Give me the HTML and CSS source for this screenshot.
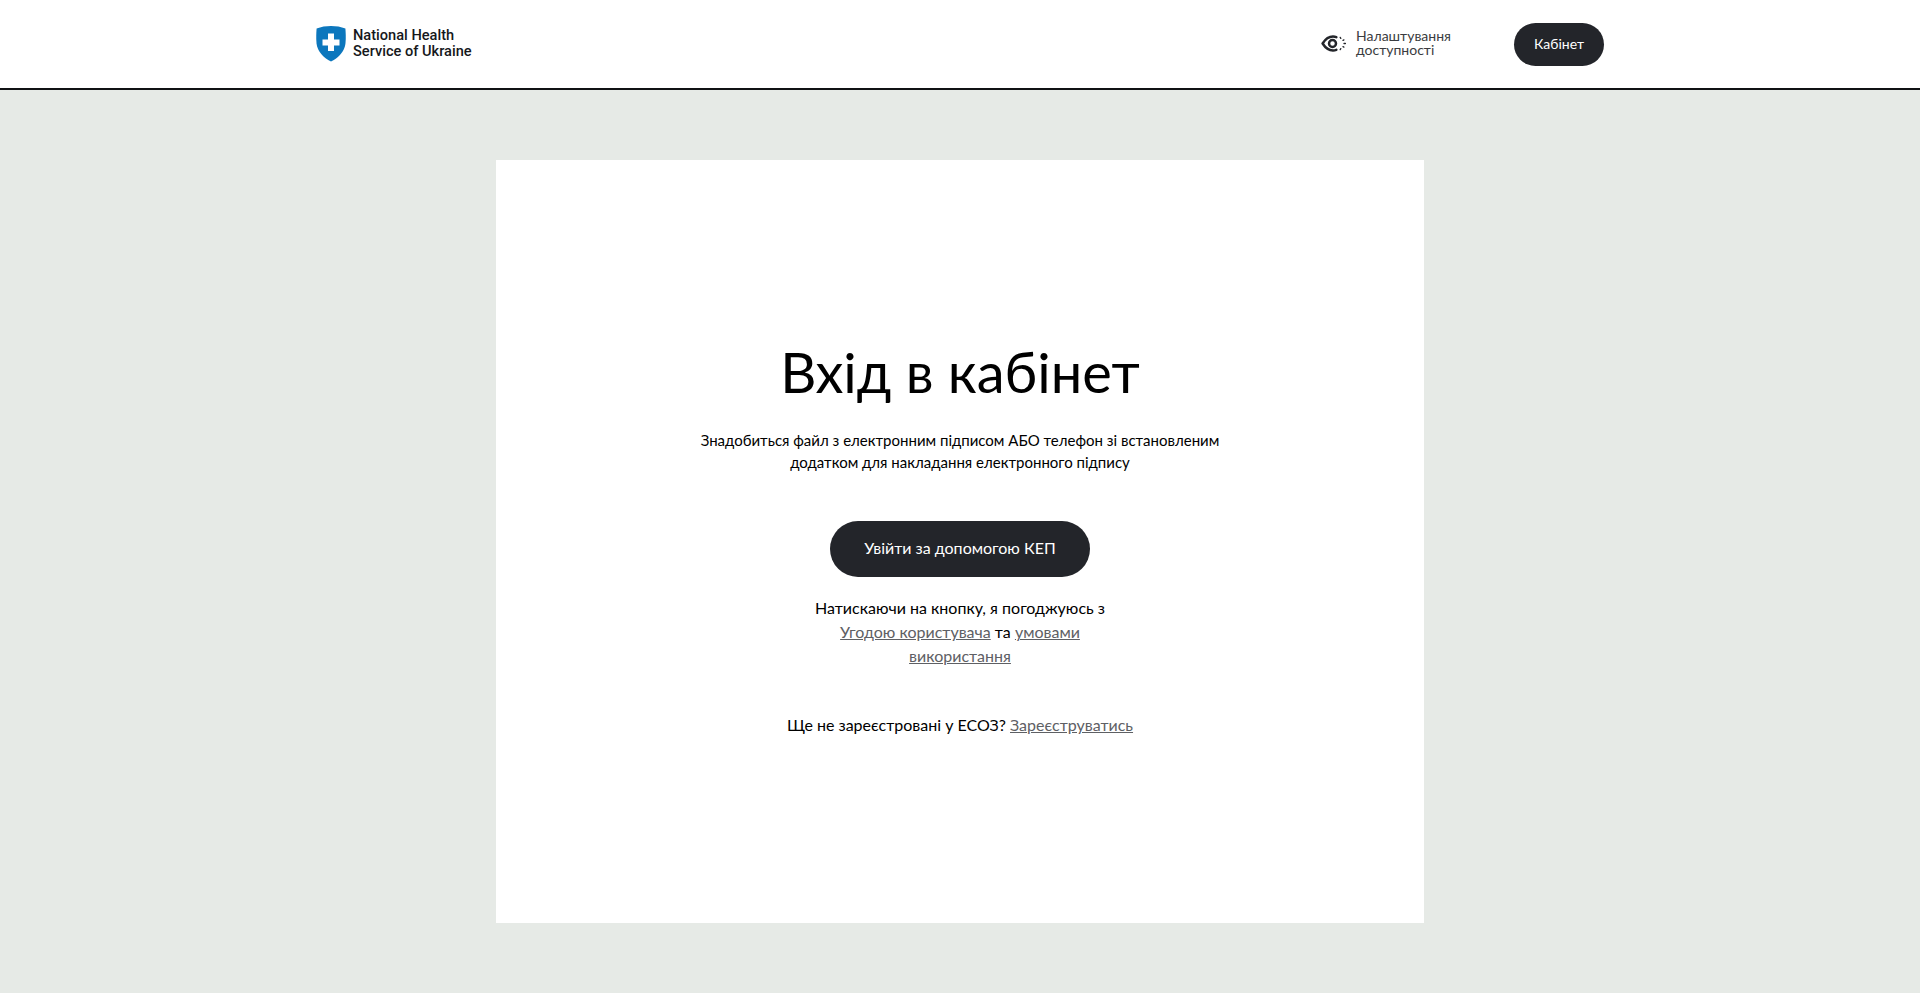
FILE: index.html
```html
<!DOCTYPE html>
<html lang="uk">
<head>
<meta charset="utf-8">
<title>Вхід в кабінет</title>
<link rel="stylesheet" href="styles.css">
</head>
<body>
<header class="header">
  <div class="header-inner">
    <a class="logo" href="#">
      <svg class="logo-mark" viewBox="0 0 30 36" width="30" height="36" aria-hidden="true">
        <path d="M15 0C10 0 5 .8 .6 2.600.2 8 0 13 .6 18c1 7.500 6.600 13.500 14.400 17.600C22.800 31.500 28.400 25.500 29.400 18c.6-5 .4-10 0-15.400C25 .8 20 0 15 0Z" fill="#0c77bd"/>
        <path d="M12 7.500h6v6h5.500v6H18V25h-6v-5.500H6.500v-6H12Z" fill="#fff"/>
      </svg>
      <span class="logo-text">National Health<br>Service of Ukraine</span>
    </a>
    <div class="header-actions">
      <a class="a11y" href="#">
        <svg class="a11y-icon" viewBox="0 0 26 20" width="26" height="20" aria-hidden="true">
          <path d="M1.600 9.500C4.500 5 8 2.600 12 2.600c1.200 0 2.300.2 3.300.6M1.600 9.500c2.900 4.500 6.400 6.900 10.400 6.900 1.200 0 2.300-.2 3.300-.6" fill="none" stroke="#23252a" stroke-width="2.500" stroke-linecap="round" stroke-linejoin="round"/>
          <circle cx="11.500" cy="9.500" r="3.500" fill="none" stroke="#23252a" stroke-width="2.500"/>
          <path d="M19.200 3.400l.6 1M22 6.400l.9-.5M23 9.500h1.400M22 12.600l.9.5M19.200 15.600l.6-1" fill="none" stroke="#23252a" stroke-width="1.300" stroke-linecap="round"/>
        </svg>
        <span class="a11y-text">Налаштування<br>доступності</span>
      </a>
      <a class="btn btn-small" href="#">Кабінет</a>
    </div>
  </div>
</header>
<main class="page">
  <section class="card">
    <h1 class="title">Вхід в кабінет</h1>
    <p class="lead">Знадобиться файл з електронним підписом АБО телефон зі встановленим додатком для накладання електронного підпису</p>
    <a class="btn btn-large" href="#">Увійти за допомогою КЕП</a>
    <p class="terms">Натискаючи на кнопку, я погоджуюсь з <a class="link" href="#">Угодою користувача</a> та <a class="link" href="#">умовами використання</a></p>
    <p class="register">Ще не зареєстровані у ЕСОЗ? <a class="link" href="#">Зареєструватись</a></p>
  </section>
</main>
</body>
</html>
```
FILE: styles.css
```css
* { box-sizing: border-box; }
html, body { margin: 0; height: 100%; }
body {
  min-height: 993px;
  background: #e6eae6;
  color: #000;
  font-family: "Lato", "Noto Sans", sans-serif;
  display: flex;
  flex-direction: column;
}
a { text-decoration: none; color: inherit; }
.header {
  height: 90px;
  background: #fff;
  border-bottom: 2px solid #101214;
  flex: none;
}
.header-inner {
  width: 1288px;
  height: 88px;
  margin: 0 auto;
  display: flex;
  align-items: center;
  justify-content: space-between;
}
.logo { display: flex; align-items: center; gap: 7px; }
.logo-mark { display: block; }
.logo-text {
  font-family: "Roboto", sans-serif;
  font-weight: 500;
  font-size: 14.6px;
  line-height: 16px;
  color: #16181b;
  padding-bottom: 2px;
}
.header-actions { display: flex; align-items: center; }
.a11y { display: flex; align-items: center; gap: 9px; margin-right: 63px; }
.a11y-text { font-size: 14px; line-height: 14px; color: #3a3c40; padding-bottom: 2px; }
.btn {
  display: flex;
  align-items: center;
  justify-content: center;
  background: #23252a;
  color: #fff;
  padding-bottom: 2px;
}
.btn-small { width: 90px; height: 43px; border-radius: 22px; font-size: 14px; }
.btn-large { width: 260px; height: 56px; border-radius: 28px; font-size: 16px; margin-top: 48px; flex: none; padding-bottom: 4px; }
.page { flex: 1; display: flex; justify-content: center; padding-top: 70px; }
.card {
  width: 928px;
  height: 763px;
  background: #fff;
  display: flex;
  flex-direction: column;
  align-items: center;
  padding-top: 178px;
  text-align: center;
}
.title { margin: 0; font-weight: 400; font-size: 56px; line-height: 68px; }
.lead { margin: 23px 0 0; width: 540px; font-size: 15px; line-height: 22px; }
.terms { margin: 19px 0 0; width: 310px; font-size: 16px; line-height: 24px; }
.register { margin: 45px 0 0; font-size: 16px; line-height: 24px; }
.link { color: #5e6064; text-decoration: underline; }
```
